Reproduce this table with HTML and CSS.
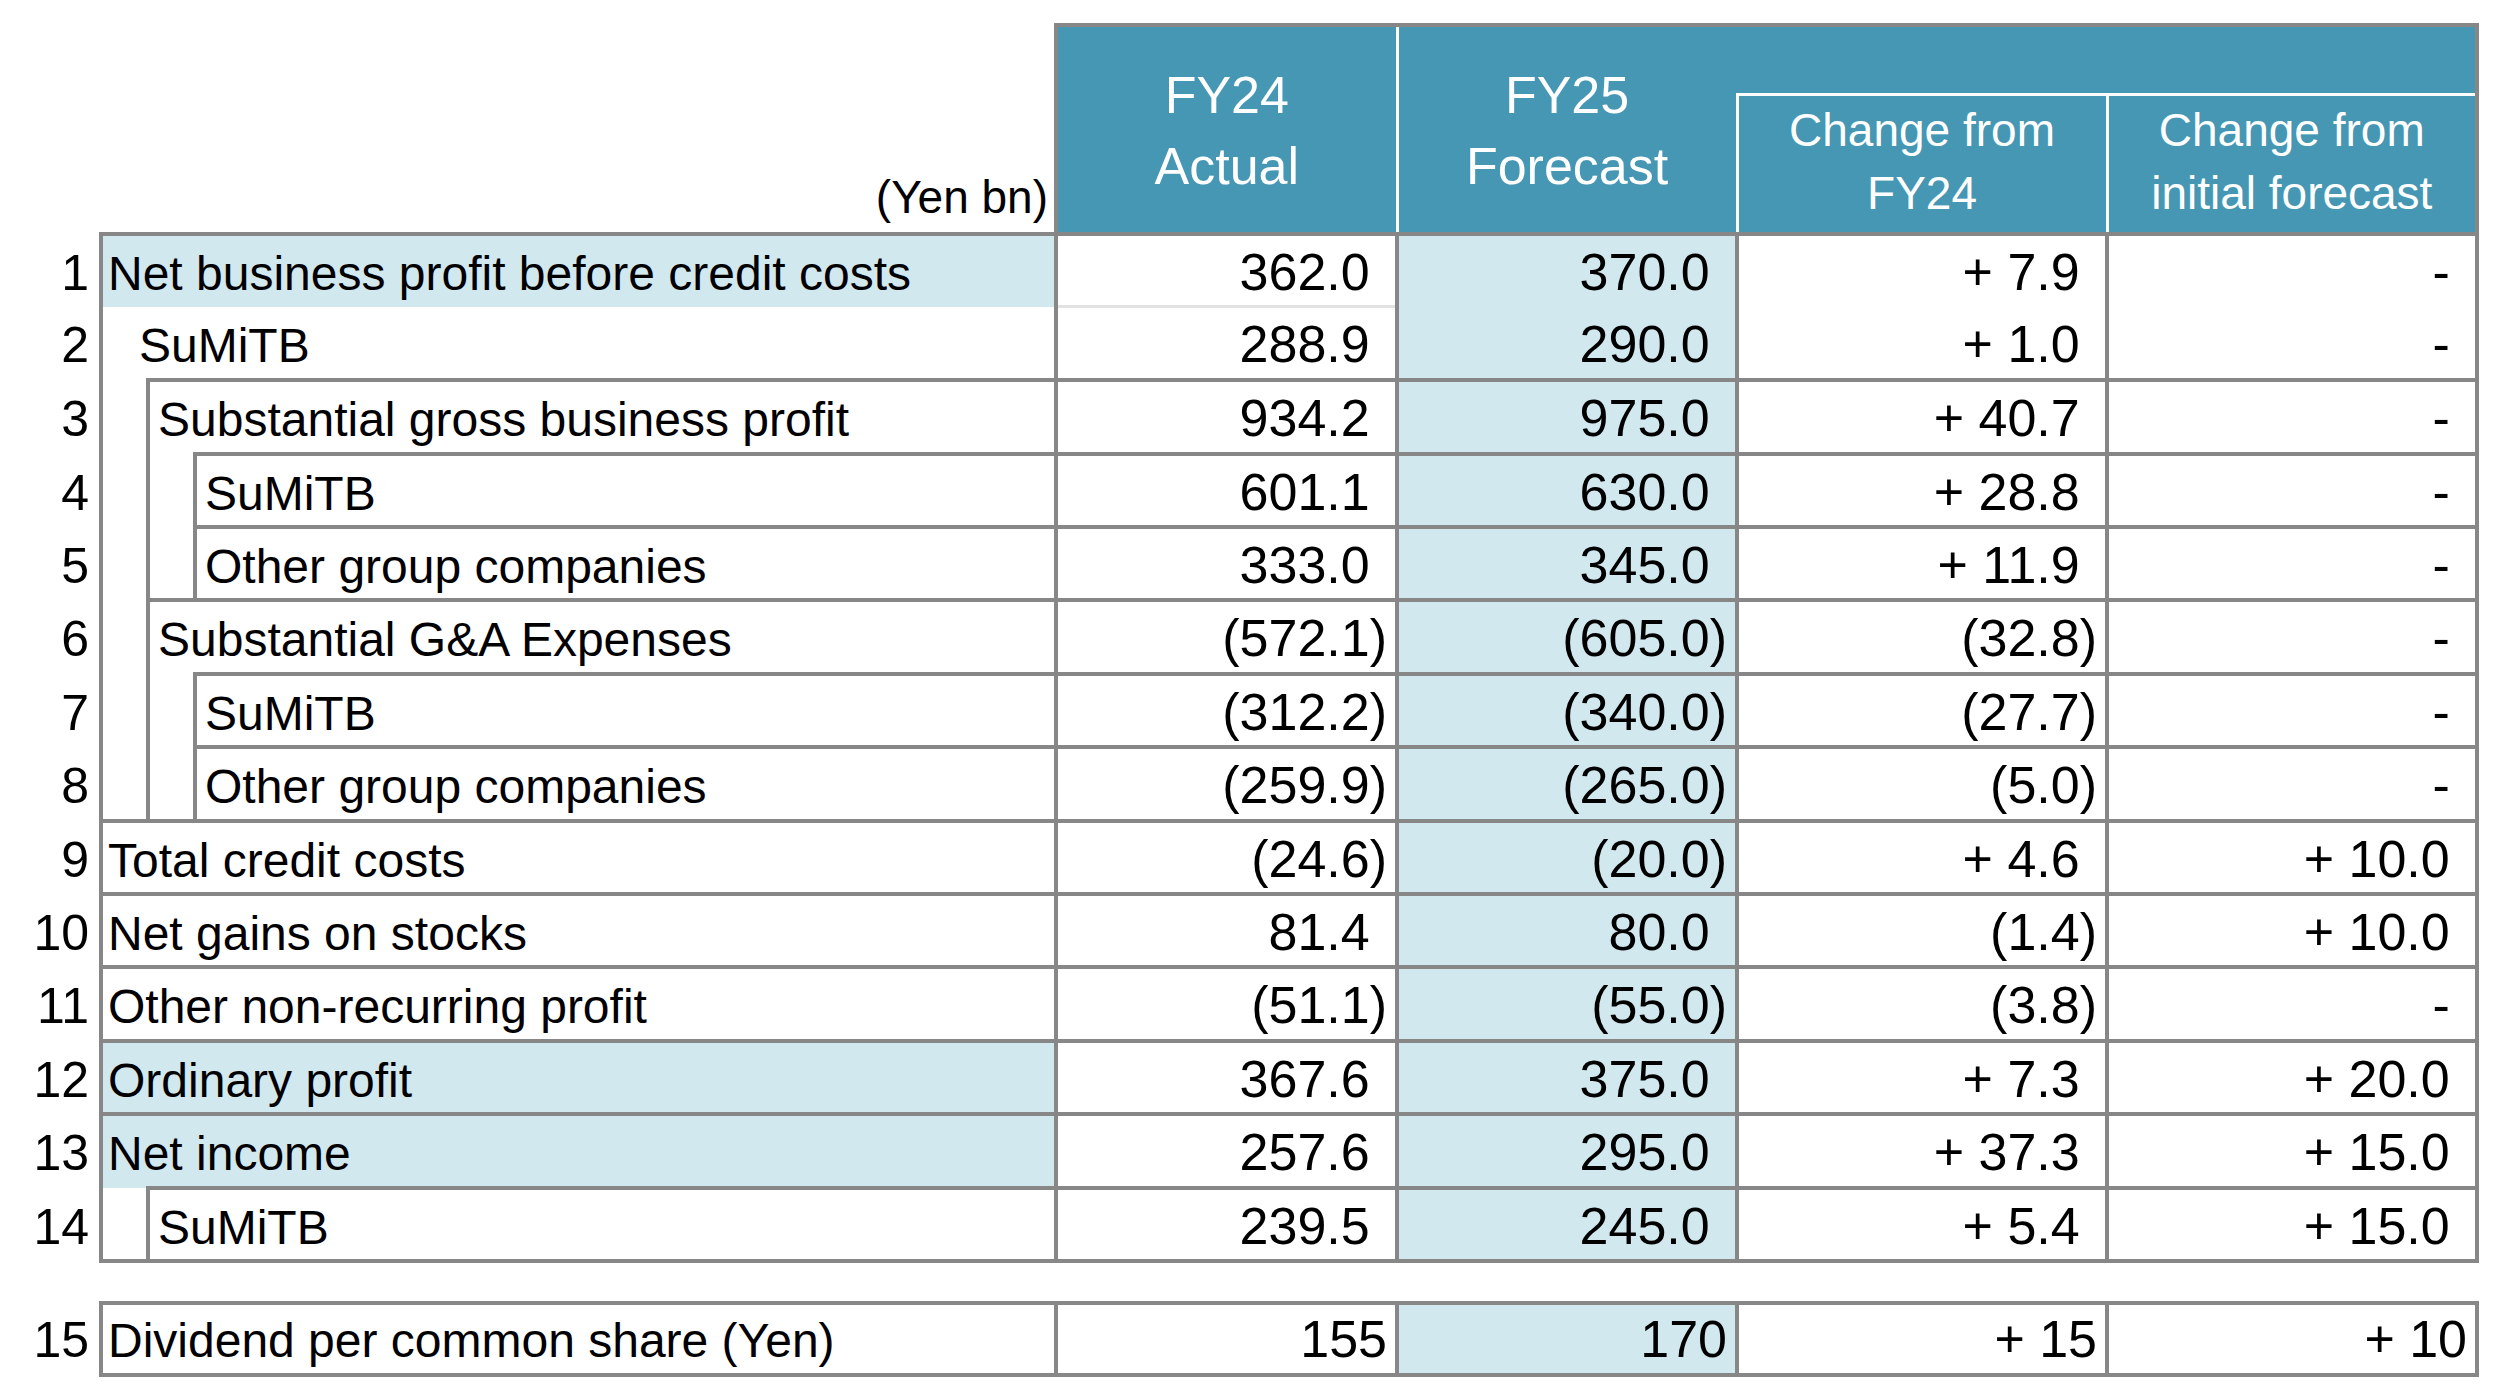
FILE: index.html
```html
<!DOCTYPE html>
<html lang="en">
<head>
<meta charset="utf-8">
<title>FY25 Forecast</title>
<link rel="stylesheet" href="styles.css">
</head>
<body>
<table class="fin">
  <colgroup>
    <col class="c-num"><col class="c-ind"><col class="c-ind"><col class="c-lab">
    <col class="c-fy24"><col class="c-fy25"><col class="c-chg"><col class="c-chg">
  </colgroup>
  <thead>
    <tr class="hA">
      <td class="corner" colspan="4" rowspan="2">(Yen bn)</td>
      <th class="hm hm-first" rowspan="2">FY24<br>Actual</th>
      <th class="hm hm-fc" rowspan="2">FY25<br>Forecast</th>
      <th class="hg" colspan="2"></th>
    </tr>
    <tr class="hB">
      <th class="hs">Change from<br>FY24</th>
      <th class="hs hs-last">Change from<br>initial forecast</th>
    </tr>
  </thead>
  <tbody>
    <tr class="r">
      <td class="no">1</td>
      <td class="lab blue" colspan="3">Net business profit before credit costs</td>
      <td class="v open-b light-b">362.0</td>
      <td class="v fc open-b">370.0</td>
      <td class="v open-b">+ 7.9</td>
      <td class="v open-b">-</td>
    </tr>
    <tr class="r">
      <td class="no">2</td>
      <td class="lab cont" colspan="3">SuMiTB</td>
      <td class="v open-t light-t">288.9</td>
      <td class="v fc open-t">290.0</td>
      <td class="v open-t">+ 1.0</td>
      <td class="v open-t">-</td>
    </tr>
    <tr class="r">
      <td class="no">3</td>
      <td class="gut" rowspan="6"></td>
      <td class="lab sub" colspan="2">Substantial gross business profit</td>
      <td class="v">934.2</td>
      <td class="v fc">975.0</td>
      <td class="v">+ 40.7</td>
      <td class="v">-</td>
    </tr>
    <tr class="r">
      <td class="no">4</td>
      <td class="gut" rowspan="2"></td>
      <td class="lab sub">SuMiTB</td>
      <td class="v">601.1</td>
      <td class="v fc">630.0</td>
      <td class="v">+ 28.8</td>
      <td class="v">-</td>
    </tr>
    <tr class="r">
      <td class="no">5</td>
      <td class="lab sub">Other group companies</td>
      <td class="v">333.0</td>
      <td class="v fc">345.0</td>
      <td class="v">+ 11.9</td>
      <td class="v">-</td>
    </tr>
    <tr class="r">
      <td class="no">6</td>
      <td class="lab sub" colspan="2">Substantial G&amp;A Expenses</td>
      <td class="v neg">(572.1)</td>
      <td class="v fc neg">(605.0)</td>
      <td class="v neg">(32.8)</td>
      <td class="v">-</td>
    </tr>
    <tr class="r">
      <td class="no">7</td>
      <td class="gut" rowspan="2"></td>
      <td class="lab sub">SuMiTB</td>
      <td class="v neg">(312.2)</td>
      <td class="v fc neg">(340.0)</td>
      <td class="v neg">(27.7)</td>
      <td class="v">-</td>
    </tr>
    <tr class="r">
      <td class="no">8</td>
      <td class="lab sub">Other group companies</td>
      <td class="v neg">(259.9)</td>
      <td class="v fc neg">(265.0)</td>
      <td class="v neg">(5.0)</td>
      <td class="v">-</td>
    </tr>
    <tr class="r">
      <td class="no">9</td>
      <td class="lab" colspan="3">Total credit costs</td>
      <td class="v neg">(24.6)</td>
      <td class="v fc neg">(20.0)</td>
      <td class="v">+ 4.6</td>
      <td class="v">+ 10.0</td>
    </tr>
    <tr class="r">
      <td class="no">10</td>
      <td class="lab" colspan="3">Net gains on stocks</td>
      <td class="v">81.4</td>
      <td class="v fc">80.0</td>
      <td class="v neg">(1.4)</td>
      <td class="v">+ 10.0</td>
    </tr>
    <tr class="r">
      <td class="no">11</td>
      <td class="lab" colspan="3">Other non-recurring profit</td>
      <td class="v neg">(51.1)</td>
      <td class="v fc neg">(55.0)</td>
      <td class="v neg">(3.8)</td>
      <td class="v">-</td>
    </tr>
    <tr class="r">
      <td class="no">12</td>
      <td class="lab blue" colspan="3">Ordinary profit</td>
      <td class="v">367.6</td>
      <td class="v fc">375.0</td>
      <td class="v">+ 7.3</td>
      <td class="v">+ 20.0</td>
    </tr>
    <tr class="r">
      <td class="no">13</td>
      <td class="lab blue" colspan="3">Net income</td>
      <td class="v">257.6</td>
      <td class="v fc">295.0</td>
      <td class="v">+ 37.3</td>
      <td class="v">+ 15.0</td>
    </tr>
    <tr class="r last">
      <td class="no">14</td>
      <td class="gut"></td>
      <td class="lab sub" colspan="2">SuMiTB</td>
      <td class="v">239.5</td>
      <td class="v fc">245.0</td>
      <td class="v">+ 5.4</td>
      <td class="v">+ 15.0</td>
    </tr>
    <tr class="gap">
      <td colspan="8"></td>
    </tr>
    <tr class="r r15">
      <td class="no">15</td>
      <td class="lab" colspan="3">Dividend per common share (Yen)</td>
      <td class="v int">155</td>
      <td class="v fc int">170</td>
      <td class="v int">+ 15</td>
      <td class="v int">+ 10</td>
    </tr>
  </tbody>
</table>
</body>
</html>
```

FILE: styles.css
```css
html, body {
  margin: 0;
  padding: 0;
  background: #ffffff;
}

body {
  font-family: "Liberation Sans", Arial, sans-serif;
  color: #000000;
}

.fin {
  border-collapse: collapse;
  table-layout: fixed;
  width: 2479px;
  margin: 23px 0 0 0;
}

.c-num { width: 101px; }
.c-ind { width: 47px; }
.c-lab { width: 861px; }
.c-fy24 { width: 341px; }
.c-fy25 { width: 340px; }
.c-chg { width: 370px; }

/* ---------- header ---------- */
.hA { height: 69px; }
.hB { height: 139.5px; }

.corner {
  border: none;
  padding: 0 6px 12px 0;
  text-align: right;
  vertical-align: bottom;
  font-size: 46px;
  line-height: 1;
  white-space: nowrap;
}

.fin th {
  background: #4597b3;
  color: #ffffff;
  font-weight: normal;
  text-align: center;
  vertical-align: middle;
  white-space: nowrap;
  padding: 0;
}

.hm {
  font-size: 52px;
  line-height: 71px;
  padding-top: 4px !important;
  border-top: 4px solid #878787;
  border-bottom: 4px solid #878787;
  border-left: 3px solid #ffffff;
  border-right: 3px solid #ffffff;
}

.hm-first { border-left: 4px solid #878787; }
.hm-fc { border-right: none; }

.hg {
  border-top: 4px solid #878787;
  border-right: 4px solid #878787;
  border-left: none;
  border-bottom: 3px solid #ffffff;
}

.hs {
  font-size: 46px;
  line-height: 63px;
  padding-bottom: 3px !important;
  border-top: 3px solid #ffffff;
  border-left: 3px solid #ffffff;
  border-right: 3px solid #ffffff;
  border-bottom: 4px solid #878787;
}

.hs-last { border-right: 4px solid #878787; }

/* ---------- body ---------- */
.r { height: 73.4px; }

.fin tbody td {
  vertical-align: baseline;
  padding: 10px 0 0 0;
  white-space: nowrap;
}

.no {
  font-size: 50px;
  line-height: 1;
  text-align: right;
  padding-right: 10px !important;
  border: none;
}

.lab {
  font-size: 48px;
  line-height: 1;
  text-align: left;
  padding-left: 5px !important;
  border-top: 4px solid #878787;
  border-left: 4px solid #878787;
  border-right: 4px solid #878787;
}

.lab.sub { padding-left: 8px !important; }

.lab.cont {
  border-top: none;
  padding-left: 36px !important;
}

.blue { background: #d2e8ef; }

.gut {
  border-left: 4px solid #878787;
  border-top: none;
  border-right: none;
  border-bottom: none;
}

.v {
  font-size: 52px;
  line-height: 1;
  text-align: right;
  padding-right: calc(8px + 0.333em) !important;
  border: 4px solid #878787;
}

.v.neg,
.v.int {
  padding-right: 8px !important;
}

.fc { background: #d2e8ef; }

.v.open-b { border-bottom: none; }
.v.open-t { border-top: none; }
.v.light-b { border-bottom: 3px solid #e2e2e2; }
.v.light-t { border-top: 3px solid #e2e2e2; }

.last .gut,
.last .lab,
.last .v {
  border-bottom: 4px solid #878787;
}

.gap { height: 42.4px; }
.fin tbody .gap td {
  border: none;
  padding: 0;
}

.r15 { height: 72px; }
.fin tbody .r15 td { padding-top: 8px; }
.r15 .lab,
.r15 .v {
  border-top: 4px solid #878787;
  border-bottom: 4px solid #878787;
}
```
